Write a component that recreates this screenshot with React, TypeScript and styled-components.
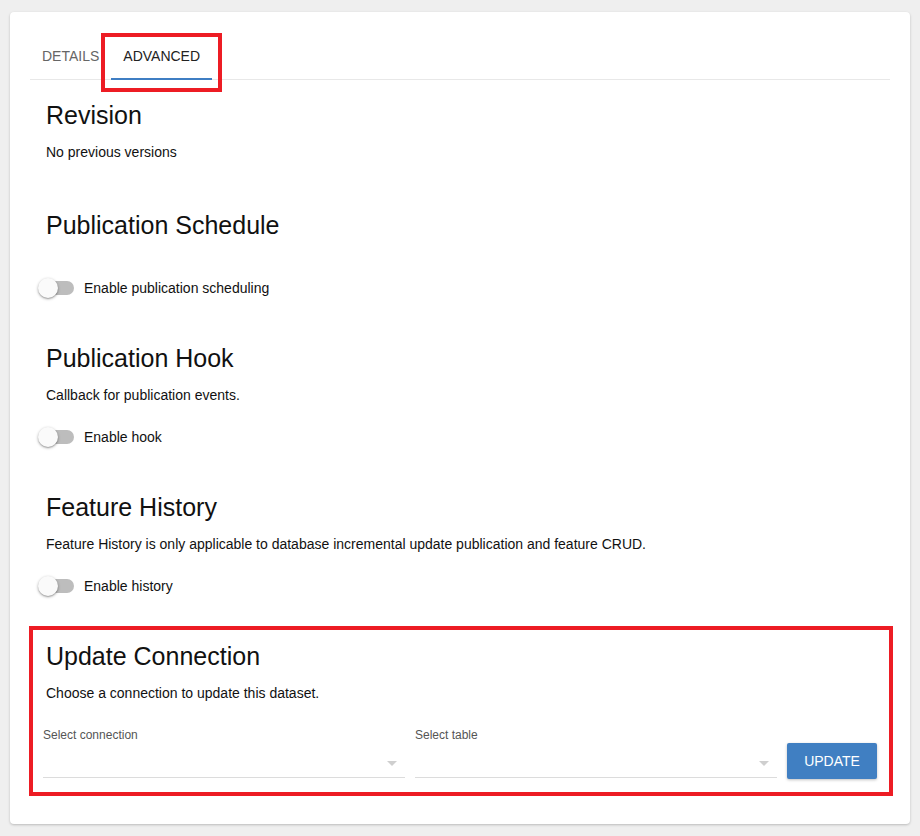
import React from "react";
import styled, { createGlobalStyle } from "styled-components";

const GlobalStyle = createGlobalStyle`
	html, body {
		margin: 0;
		padding: 0;
		background: #efefef;
		font-family: "Liberation Sans", Arial, sans-serif;
	}
	* {
		box-sizing: border-box;
	}
`;

interface SectionInfo {
	title: string;
	text?: string;
	toggle?: string;
	top: number;
	toggleTop?: number;
}

const sections: SectionInfo[] = [
	{ title: "Revision", text: "No previous versions", top: 20 },
	{
		title: "Publication Schedule",
		toggle: "Enable publication scheduling",
		top: 48,
		toggleTop: 29,
	},
	{
		title: "Publication Hook",
		text: "Callback for publication events.",
		toggle: "Enable hook",
		top: 36,
	},
	{
		title: "Feature History",
		text: "Feature History is only applicable to database incremental update publication and feature CRUD.",
		toggle: "Enable history",
		top: 36,
	},
];

const ArrowDrop = () => (
	<svg width="24" height="24" viewBox="0 0 24 24">
		<path d="M7 10l5 5 5-5z" fill="#cfcfcf" />
	</svg>
);

const App: React.FC = () => {
	return (
		<Page>
			<GlobalStyle />
			<Card>
				<TabList>
					<Tab>Details</Tab>
					<Tab $active>
						Advanced
						<Highlight />
					</Tab>
				</TabList>

				<Content>
					{sections.map((s) => (
						<Section key={s.title} $top={s.top}>
							<Heading>{s.title}</Heading>
							{s.text && <Text>{s.text}</Text>}
							{s.toggle && (
								<SwitchRow $top={s.toggleTop ?? 13}>
									<Switch>
										<Track />
										<Thumb />
									</Switch>
									<SwitchLabel>{s.toggle}</SwitchLabel>
								</SwitchRow>
							)}
						</Section>
					))}

					<MarkedSection>
						<Heading $inset>Update Connection</Heading>
						<Text $inset>Choose a connection to update this dataset.</Text>
						<FormRow>
							<Field>
								<FieldLabel>Select connection</FieldLabel>
								<SelectBox>
									<ArrowDrop />
								</SelectBox>
							</Field>
							<Field>
								<FieldLabel>Select table</FieldLabel>
								<SelectBox>
									<ArrowDrop />
								</SelectBox>
							</Field>
							<UpdateButton>Update</UpdateButton>
						</FormRow>
					</MarkedSection>
				</Content>
			</Card>
		</Page>
	);
};

export default App;

const Page = styled.div`
	padding: 12px 10px 11px;
	min-height: 836px;
`;

const Card = styled.div`
	background: #fff;
	border-radius: 4px;
	box-shadow: 0 1px 3px rgba(0, 0, 0, 0.15), 0 1px 2px rgba(0, 0, 0, 0.08);
	padding: 19px 20px 28px;
`;

const TabList = styled.div`
	display: flex;
	border-bottom: 1px solid #e8e8e8;
`;

const Tab = styled.div<{ $active?: boolean }>`
	position: relative;
	height: 49px;
	margin-bottom: -1px;
	padding: 2px 12px 0;
	display: flex;
	align-items: center;
	font-size: 14px;
	text-transform: uppercase;
	color: ${({ $active }) => ($active ? "#222" : "#666")};
	border-bottom: 2px solid
		${({ $active }) => ($active ? "#3f7ec3" : "transparent")};
`;

const Highlight = styled.span`
	position: absolute;
	left: -10px;
	right: -10px;
	top: 2px;
	bottom: -14px;
	border: 4px solid #ed1c24;
	pointer-events: none;
`;

const Content = styled.div`
	padding: 0 16px;
`;

const Section = styled.section<{ $top: number }>`
	margin-top: ${({ $top }) => $top}px;
`;

const Heading = styled.h2<{ $inset?: boolean }>`
	margin: 0 0 0 ${({ $inset }) => ($inset ? 3 : 0)}px;
	font-size: 25px;
	line-height: 30px;
	font-weight: 400;
	color: #111;
`;

const Text = styled.p<{ $inset?: boolean }>`
	margin: 12px 0 0 ${({ $inset }) => ($inset ? 3 : 0)}px;
	font-size: 14px;
	line-height: 20px;
	color: #111;
`;

const SwitchRow = styled.div<{ $top: number }>`
	display: flex;
	align-items: center;
	height: 38px;
	margin: ${({ $top }) => $top}px 0 0 -8px;
`;

const Switch = styled.div`
	position: relative;
	width: 36px;
	height: 20px;
	margin-right: 10px;
`;

const Track = styled.div`
	position: absolute;
	left: 2px;
	right: 0;
	top: 3px;
	height: 14px;
	border-radius: 7px;
	background: #bdbdbd;
`;

const Thumb = styled.div`
	position: absolute;
	left: 0;
	top: 0;
	width: 20px;
	height: 20px;
	border-radius: 50%;
	background: #fafafa;
	box-shadow: 0 1px 3px rgba(0, 0, 0, 0.35), 0 1px 1px rgba(0, 0, 0, 0.14);
`;

const SwitchLabel = styled.span`
	font-size: 14px;
	color: #111;
`;

const MarkedSection = styled.section`
	margin: 21px -19px 0 -17px;
	border: 4px solid #ed1c24;
	padding: 11px 12px 14px 10px;
`;

const FormRow = styled.div`
	display: flex;
	align-items: flex-end;
	gap: 10px;
	margin-top: 24px;
`;

const Field = styled.div`
	flex: 1;
	display: flex;
	flex-direction: column;
`;

const FieldLabel = styled.label`
	font-size: 12px;
	line-height: 16px;
	color: #555;
`;

const SelectBox = styled.div`
	height: 35px;
	border-bottom: 1px solid #dcdcdc;
	display: flex;
	justify-content: flex-end;
	align-items: flex-end;
	padding: 0 1px 2px 0;
`;

const UpdateButton = styled.button`
	width: 90px;
	height: 36px;
	border: none;
	border-radius: 2px;
	background: #407fc2;
	color: #fff;
	font-family: "Liberation Sans", Arial, sans-serif;
	font-size: 14px;
	text-transform: uppercase;
	box-shadow: 0 1px 3px rgba(0, 0, 0, 0.25);
	margin-bottom: -1px;
`;
